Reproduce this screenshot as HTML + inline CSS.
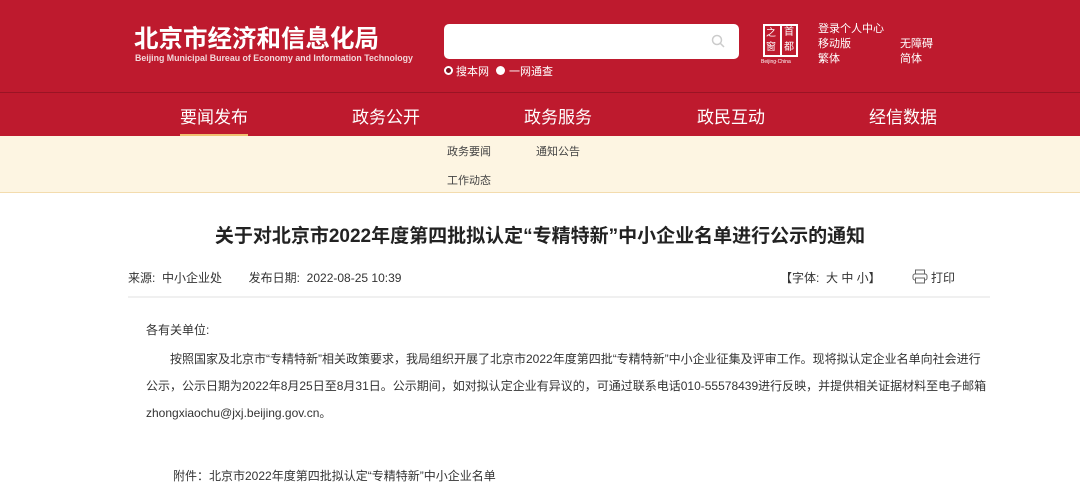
<!DOCTYPE html>
<html><head><meta charset="utf-8"><style>
*{margin:0;padding:0;box-sizing:border-box}
body{width:1080px;height:496px;overflow:hidden;background:#fff;font-family:"Liberation Sans","Noto Sans CJK SC",sans-serif;position:relative}
.a{position:absolute;white-space:nowrap}
</style></head><body>
<div class="a" style="left:0;top:0;width:1080px;height:92px;background:#be1a2e"></div>
<div class="a" style="left:0;top:92px;width:1080px;height:1px;background:#9a1424"></div>
<div class="a" style="left:0;top:93px;width:1080px;height:43px;background:#be1a2e"></div>
<div class="a" style="left:134px;top:20px;font-size:24.5px;font-weight:bold;color:#fff">北京市经济和信息化局</div>
<div class="a" style="left:135px;top:53px;font-size:8.8px;font-weight:bold;color:#f3d7da">Beijing Municipal Bureau of Economy and Information Technology</div>
<div class="a" style="left:444px;top:24px;width:295px;height:35px;background:#fff;border-radius:5px"></div>
<svg class="a" style="left:711px;top:34px" width="14" height="14"><circle cx="6" cy="6" r="4.5" fill="none" stroke="#ccc" stroke-width="1.5"/><line x1="9.5" y1="9.5" x2="13" y2="13" stroke="#ccc" stroke-width="1.5"/></svg>
<div class="a" style="left:444px;top:66px;width:9px;height:9px;border-radius:50%;border:2px solid #fff;background:#7a0f1c"></div>
<div class="a" style="left:456px;top:63px;font-size:11px;color:#fff">搜本网</div>
<div class="a" style="left:496px;top:66px;width:9px;height:9px;border-radius:50%;background:#fff"></div>
<div class="a" style="left:509px;top:63px;font-size:11px;color:#fff">一网通查</div>
<div class="a" style="left:763px;top:24px;width:35px;height:33px;border:2px solid #fff"></div>
<div class="a" style="left:780px;top:24px;width:2px;height:33px;background:#fff"></div>
<div class="a" style="left:766px;top:27px;font-size:10px;line-height:13px;color:#fff">之</div>
<div class="a" style="left:784px;top:26px;font-size:10px;line-height:13px;color:#fff">首</div>
<div class="a" style="left:766px;top:41px;font-size:10px;line-height:13px;color:#fff">窗</div>
<div class="a" style="left:784px;top:41px;font-size:10px;line-height:13px;color:#fff">都</div>
<div class="a" style="left:761px;top:59px;font-size:5px;color:#fff">Beijing·China</div>
<div class="a" style="left:818px;top:22px;font-size:11px;color:#fff;line-height:15px">登录个人中心<br>移动版<br>繁体</div>
<div class="a" style="left:900px;top:37px;font-size:11px;color:#fff;line-height:15px">无障碍<br>简体</div>
<div class="a" style="left:180px;top:103px;font-size:17px;color:#fff">要闻发布</div>
<div class="a" style="left:352px;top:103px;font-size:17px;color:#fff">政务公开</div>
<div class="a" style="left:524px;top:103px;font-size:17px;color:#fff">政务服务</div>
<div class="a" style="left:697px;top:103px;font-size:17px;color:#fff">政民互动</div>
<div class="a" style="left:869px;top:103px;font-size:17px;color:#fff">经信数据</div>
<div class="a" style="left:0;top:136px;width:1080px;height:57px;background:#fdf5e2;border-bottom:1px solid #f3dcae"></div>
<div class="a" style="left:180px;top:134px;width:68px;height:2px;background:#f0c070"></div>
<div class="a" style="left:447px;top:143px;font-size:11px;color:#444">政务要闻</div>
<div class="a" style="left:536px;top:143px;font-size:11px;color:#444">通知公告</div>
<div class="a" style="left:447px;top:172px;font-size:11px;color:#444">工作动态</div>
<div class="a" style="left:0;top:221px;width:1080px;text-align:center;font-size:19px;font-weight:bold;color:#222">关于对北京市2022年度第四批拟认定“专精特新”中小企业名单进行公示的通知</div>
<div class="a" style="left:128px;top:269px;font-size:12px;color:#333">来源:&nbsp; 中小企业处 &nbsp;&nbsp;&nbsp;&nbsp;&nbsp;&nbsp; 发布日期:&nbsp; 2022-08-25 10:39</div>
<div class="a" style="left:780px;top:269px;font-size:12px;color:#333">【字体:&nbsp; 大 中 小】</div>
<svg class="a" style="left:912px;top:269px" width="16" height="15"><rect x="3.5" y="1" width="9" height="4" fill="none" stroke="#666"/><rect x="1" y="5" width="14" height="6" rx="2" fill="none" stroke="#666"/><rect x="3.5" y="9" width="9" height="5" fill="#fff" stroke="#666"/></svg>
<div class="a" style="left:931px;top:269px;font-size:12px;color:#333">打印</div>
<div class="a" style="left:128px;top:296px;width:862px;height:2px;background:#f0f0f0"></div>
<div class="a" style="left:146px;top:321px;font-size:12px;color:#333">各有关单位:</div>
<div class="a" style="left:146px;top:346px;width:842px;font-size:12px;line-height:27px;color:#333;white-space:normal;text-indent:24px">按照国家及北京市“专精特新”相关政策要求，我局组织开展了北京市2022年度第四批“专精特新”中小企业征集及评审工作。现将拟认定企业名单向社会进行公示，公示日期为2022年8月25日至8月31日。公示期间，如对拟认定企业有异议的，可通过联系电话010-55578439进行反映，并提供相关证据材料至电子邮箱zhongxiaochu@jxj.beijing.gov.cn。</div>
<div class="a" style="left:173px;top:467px;font-size:12px;color:#333">附件：北京市2022年度第四批拟认定“专精特新”中小企业名单</div>
</body></html>
